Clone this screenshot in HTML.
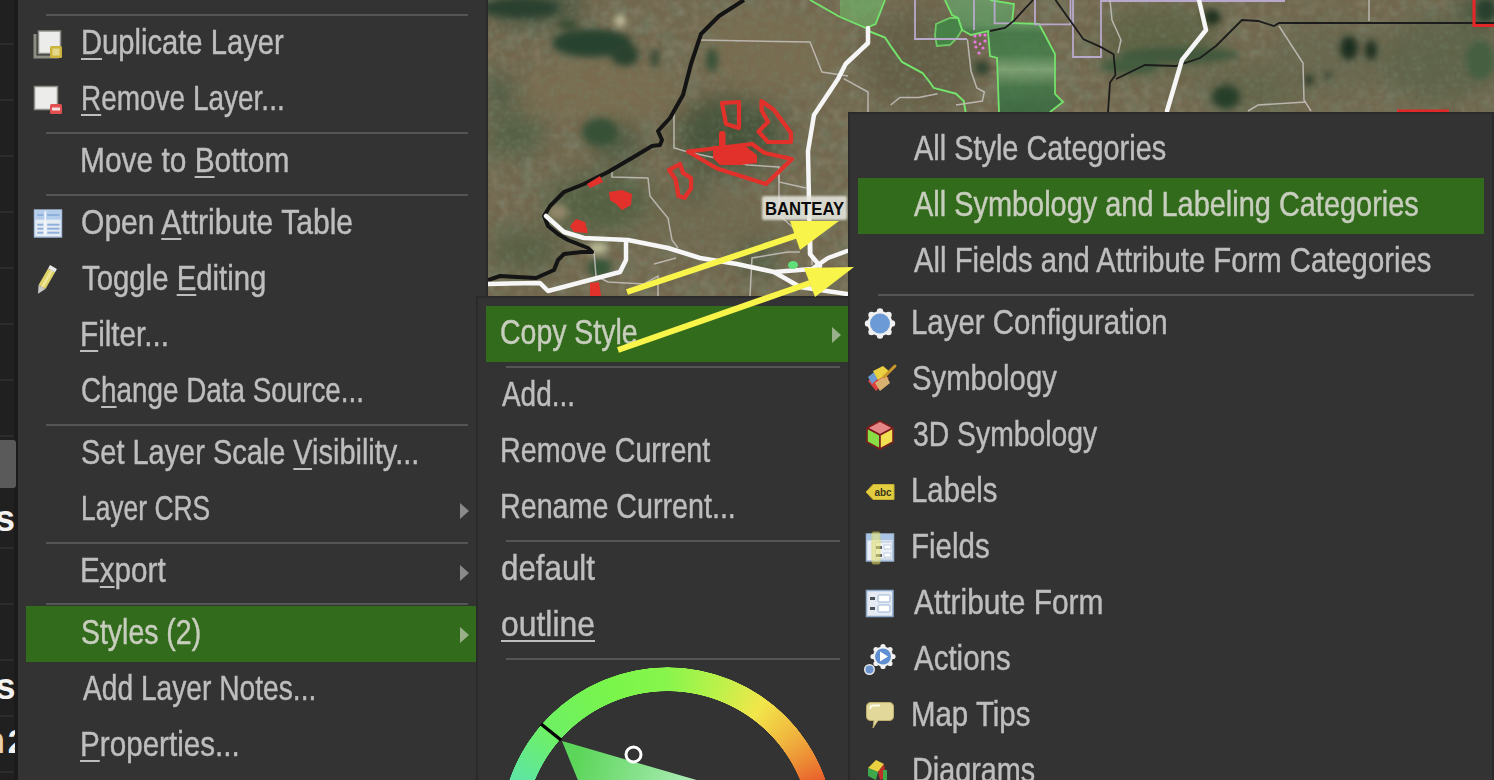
<!DOCTYPE html>
<html><head><meta charset="utf-8"><style>
html,body{margin:0;padding:0;width:1494px;height:780px;overflow:hidden;background:#333;position:relative}
.t{position:absolute;font-family:"Liberation Sans",sans-serif;font-size:35px;line-height:56px;white-space:nowrap;transform-origin:0 0;-webkit-text-stroke:0.45px currentColor}
.t u{text-decoration:underline;text-decoration-thickness:2px;text-underline-offset:4px}
.sep{position:absolute;height:2px;background:#555}
.sl{position:absolute;left:0;width:14px;height:2px;background:#2c2c2c}
.abs{position:absolute}
.arr{position:absolute;width:0;height:0;border-top:8px solid transparent;border-bottom:8px solid transparent;border-left:9px solid #8a8a8a}
</style></head><body>
<!-- left strip -->
<div class="abs" style="left:0;top:0;width:14px;height:780px;background:#202020"></div>
<div class="abs" style="left:14px;top:0;width:4px;height:780px;background:#1b1b1b"></div>
<div class="sl" style="top:43px"></div><div class="sl" style="top:99px"></div><div class="sl" style="top:155px"></div><div class="sl" style="top:211px"></div><div class="sl" style="top:267px"></div><div class="sl" style="top:323px"></div><div class="sl" style="top:379px"></div><div class="sl" style="top:435px"></div><div class="sl" style="top:547px"></div><div class="sl" style="top:603px"></div><div class="sl" style="top:659px"></div><div class="sl" style="top:715px"></div><div class="sl" style="top:771px"></div>
<div class="abs" style="left:0;top:440px;width:16px;height:48px;background:#5a5a5a;border-radius:0 3px 3px 0"></div>
<div class="abs" style="left:0;top:0;width:15px;height:780px;overflow:hidden">
<div class="abs" style="left:-5px;top:499px;font:bold 36px 'Liberation Sans',sans-serif;color:#f2f2f2;line-height:40px">s</div>
<div class="abs" style="left:-4.5px;top:667px;font:bold 36px 'Liberation Sans',sans-serif;color:#f2f2f2;line-height:40px">s</div>
<div class="abs" style="left:-17px;top:721px;font:bold 36px 'Liberation Sans',sans-serif;color:#e8d0a8;line-height:40px">n</div>
<div class="abs" style="left:7.7px;top:722px;font:bold 33px 'Liberation Sans',sans-serif;color:#f2f2f2;line-height:40px">2</div>
</div>
<!-- menu 1 -->
<div class="abs" style="left:18px;top:0;width:468px;height:780px;background:#333"></div>
<div class="abs" style="left:486px;top:0;width:2px;height:780px;background:#2a2a2a"></div>
<div class="sep" style="left:46px;top:14px;width:422px"></div><div class="sep" style="left:46px;top:132px;width:422px"></div><div class="sep" style="left:46px;top:194px;width:422px"></div><div class="sep" style="left:46px;top:424px;width:422px"></div><div class="sep" style="left:46px;top:542px;width:422px"></div><div class="sep" style="left:46px;top:603px;width:422px"></div>
<div class="abs" style="left:26px;top:606px;width:450px;height:56px;background:#336b1d"></div>
<div class="arr" style="left:460px;top:503px"></div>
<div class="arr" style="left:460px;top:565px"></div>
<div class="arr" style="left:460px;top:627px;border-left-color:#9ab08a"></div>
<svg width="80" height="300" viewBox="0 0 80 300" style="position:absolute;left:0;top:0">
<!-- duplicate -->
<path d="M35,34 L35,57 L59,57" fill="none" stroke="#8d8d84" stroke-width="3"/>
<rect x="38.5" y="31" width="22" height="22.5" fill="#ececea" stroke="#8e8e88" stroke-width="1.5"/>
<rect x="50" y="46" width="12" height="12" rx="1.5" fill="#cdb43c"/>
<rect x="52.5" y="48.5" width="7" height="7" fill="#e6d88a"/>
<!-- remove -->
<rect x="34.5" y="86.5" width="23" height="23" fill="#ececea" stroke="#8e8e88" stroke-width="1.5"/>
<rect x="50" y="104" width="12" height="10" rx="1.5" fill="#e05050"/>
<rect x="52" y="107.5" width="8" height="3" fill="#f6e0e0"/>
<!-- table -->
<rect x="34.5" y="210" width="27" height="27" fill="#e6ecf4" stroke="#a8c0e0" stroke-width="1.4"/>
<rect x="35.2" y="210.7" width="25.6" height="9" fill="#b4cdea"/>
<g stroke="#8fb0d8" stroke-width="2">
<line x1="37.3" y1="215" x2="43.3" y2="215"/><line x1="47.3" y1="215" x2="59.5" y2="215"/>
<line x1="37.3" y1="224.7" x2="43.3" y2="224.7"/><line x1="47.3" y1="224.7" x2="59.5" y2="224.7"/>
<line x1="37.3" y1="228.7" x2="43.3" y2="228.7"/><line x1="47.3" y1="228.7" x2="59.5" y2="228.7"/>
<line x1="37.3" y1="232.7" x2="43.3" y2="232.7"/><line x1="47.3" y1="232.7" x2="59.5" y2="232.7"/>
</g>
<line x1="45.3" y1="211" x2="45.3" y2="236" stroke="#f4f8fc" stroke-width="1.6"/>
<!-- pencil -->
<g transform="translate(46,280) rotate(30)">
 <rect x="-4" y="-11" width="8" height="19" fill="#ddd36a"/>
 <rect x="-1" y="-11" width="2.5" height="19" fill="#efe79a"/>
 <rect x="-4" y="-15" width="8" height="4" fill="#e8e8e8"/>
 <path d="M-4,8 L4,8 L0,16 Z" fill="#c8c8c4"/>
</g>
</svg>

<div class="t" style="left:80.50px;top:14px;transform:scaleX(0.8333);color:#bebebe"><u>D</u>uplicate Layer</div>
<div class="t" style="left:80.60px;top:70px;transform:scaleX(0.7992);color:#bebebe"><u>R</u>emove Layer...</div>
<div class="t" style="left:80.44px;top:132px;transform:scaleX(0.8542);color:#bebebe">Move to <u>B</u>ottom</div>
<div class="t" style="left:81.28px;top:194px;transform:scaleX(0.8594);color:#bebebe">Open <u>A</u>ttribute Table</div>
<div class="t" style="left:82.16px;top:250px;transform:scaleX(0.8387);color:#bebebe">Toggle <u>E</u>diting</div>
<div class="t" style="left:80.45px;top:306px;transform:scaleX(0.8485);color:#bebebe"><u>F</u>ilter...</div>
<div class="t" style="left:81.41px;top:362px;transform:scaleX(0.7949);color:#bebebe">C<u>h</u>ange Data Source...</div>
<div class="t" style="left:81.35px;top:424px;transform:scaleX(0.8267);color:#bebebe">Set Layer Scale <u>V</u>isibility...</div>
<div class="t" style="left:80.74px;top:480px;transform:scaleX(0.7545);color:#bebebe">Layer CRS</div>
<div class="t" style="left:80.46px;top:542px;transform:scaleX(0.8469);color:#bebebe">E<u>x</u>port</div>
<div class="t" style="left:81.38px;top:604px;transform:scaleX(0.8125);color:#c8cebe">Styles (2)</div>
<div class="t" style="left:83.00px;top:660px;transform:scaleX(0.8049);color:#bebebe">Add Layer Notes...</div>
<div class="t" style="left:80.46px;top:716px;transform:scaleX(0.8470);color:#bebebe"><u>P</u>roperties...</div>

<!-- map -->
<div class="abs" style="left:488px;top:0;width:1006px;height:296px;overflow:hidden;background:#7b7358">
<svg width="1006" height="296" viewBox="488 0 1006 296" style="position:absolute;left:0;top:0">
<defs>
<filter id="bl" x="-50%" y="-50%" width="200%" height="200%"><feGaussianBlur stdDeviation="12"/></filter>
<filter id="bl2" x="-50%" y="-50%" width="200%" height="200%"><feGaussianBlur stdDeviation="3.5"/></filter>
<filter id="bl3" x="-50%" y="-50%" width="200%" height="200%"><feGaussianBlur stdDeviation="1.2"/></filter>
<filter id="noise" x="0" y="0" width="100%" height="100%">
 <feTurbulence type="fractalNoise" baseFrequency="0.12" numOctaves="3" seed="11" result="n"/>
 <feColorMatrix in="n" type="matrix" values="0 0 0 0 0.58  0 0 0 0 0.53  0 0 0 0 0.42  0 0 0 2.2 -0.95" result="c"/>
 <feGaussianBlur in="c" stdDeviation="1"/>
</filter>
<filter id="noise2" x="0" y="0" width="100%" height="100%">
 <feTurbulence type="fractalNoise" baseFrequency="0.05" numOctaves="2" seed="3" result="n"/>
 <feColorMatrix in="n" type="matrix" values="0 0 0 0 0.22  0 0 0 0 0.3  0 0 0 0 0.2  0 0 0 2.4 -1.1"/>
</filter>
<linearGradient id="gC" gradientUnits="userSpaceOnUse" x1="0" y1="0" x2="0" y2="112">
 <stop offset="0" stop-color="#6aa26a"/><stop offset="0.22" stop-color="#5c9a60"/><stop offset="0.3" stop-color="#3a7c46"/><stop offset="0.48" stop-color="#3f8049"/><stop offset="0.62" stop-color="#7fb07c"/><stop offset="0.78" stop-color="#3c7847"/><stop offset="1" stop-color="#2e6a3e"/>
</linearGradient>
<filter id="speck" x="0" y="0" width="100%" height="100%">
 <feTurbulence type="turbulence" baseFrequency="0.18" numOctaves="2" seed="5" result="n"/>
 <feColorMatrix in="n" type="matrix" values="0 0 0 0 0.22  0 0 0 0 0.3  0 0 0 0 0.2  3 0 0 0 -0.75" result="c"/>
 <feGaussianBlur in="c" stdDeviation="1.3"/>
</filter>
<filter id="speck2" x="0" y="0" width="100%" height="100%">
 <feTurbulence type="fractalNoise" baseFrequency="0.3" numOctaves="2" seed="9" result="n"/>
 <feColorMatrix in="n" type="matrix" values="0 0 0 0 0.72  0 0 0 0 0.66  0 0 0 0 0.55  0 0 0 4 -2.5"/>
</filter>
</defs>
<rect x="488" y="0" width="1006" height="296" fill="#827459"/>
<rect x="488" y="0" width="1006" height="296" filter="url(#noise2)" opacity="0.45"/>
<rect x="488" y="0" width="1006" height="296" filter="url(#noise)" opacity="0.3"/>
<g filter="url(#bl)" opacity="0.9">
 <ellipse cx="535" cy="8" rx="50" ry="14" fill="#3e5640"/>
 <ellipse cx="500" cy="92" rx="14" ry="18" fill="#4a5e44"/>
 <ellipse cx="515" cy="135" rx="30" ry="22" fill="#5a6a4c"/>
 <ellipse cx="617" cy="142" rx="24" ry="18" fill="#4e6246"/>
 <ellipse cx="730" cy="135" rx="55" ry="38" fill="#4c5c40"/>
 <ellipse cx="693" cy="192" rx="16" ry="14" fill="#4a5e42"/>
 <ellipse cx="600" cy="203" rx="55" ry="30" fill="#5c6a4a"/>
 <ellipse cx="525" cy="250" rx="38" ry="22" fill="#606a4c"/>
 <ellipse cx="757" cy="258" rx="20" ry="15" fill="#4e6246"/>
 <ellipse cx="600" cy="90" rx="80" ry="30" fill="#8c7a5a"/>
 <ellipse cx="770" cy="50" rx="70" ry="40" fill="#8a7a5c"/>
 <ellipse cx="710" cy="220" rx="70" ry="25" fill="#7f765a"/>
 <ellipse cx="920" cy="60" rx="60" ry="50" fill="#72694f"/>
 <ellipse cx="1160" cy="40" rx="60" ry="35" fill="#6a6e4e"/>
 <ellipse cx="1250" cy="90" rx="50" ry="25" fill="#6f7152"/>
 <ellipse cx="1330" cy="60" rx="60" ry="40" fill="#78745a"/>
 <ellipse cx="1440" cy="60" rx="60" ry="45" fill="#6a7052"/>
 <ellipse cx="1480" cy="10" rx="20" ry="15" fill="#3e5a40"/>
</g>
<rect x="488" y="0" width="1006" height="296" filter="url(#speck)" opacity="0.45"/>
<g filter="url(#bl2)">
 <ellipse cx="592" cy="43" rx="40" ry="14" fill="#2c4834"/>
 <ellipse cx="625" cy="55" rx="14" ry="11" fill="#2d4834"/>
 <ellipse cx="568" cy="24" rx="10" ry="5" fill="#3a5238"/>
 <ellipse cx="655" cy="58" rx="4" ry="10" fill="#38503a"/>
 <ellipse cx="712" cy="60" rx="6" ry="12" fill="#3c5a3e"/>
 <ellipse cx="1212" cy="17" rx="9" ry="8" fill="#213424"/>
 <ellipse cx="1486" cy="10" rx="10" ry="12" fill="#2a4432"/>
 <ellipse cx="1349" cy="48" rx="9" ry="12" fill="#1f3322"/>
 <ellipse cx="1371" cy="50" rx="6" ry="10" fill="#1f3322"/>
 <ellipse cx="1226" cy="97" rx="14" ry="12" fill="#2c442f"/>
 <ellipse cx="1309" cy="80" rx="4" ry="6" fill="#233624"/>
 <ellipse cx="1328" cy="75" rx="3" ry="4" fill="#2a3c2a"/>
 <ellipse cx="982" cy="68" rx="8" ry="7" fill="#344a34"/>
 <ellipse cx="1180" cy="55" rx="60" ry="8" fill="#4a6444"/>
 <ellipse cx="1130" cy="66" rx="30" ry="8" fill="#4b6846"/>
 <ellipse cx="1480" cy="60" rx="14" ry="20" fill="#4e6a4a"/>
 <ellipse cx="598" cy="248" rx="10" ry="6" fill="#d8d8b0"/>
 <ellipse cx="620" cy="21" rx="6" ry="5" fill="#ece8c0"/>
 <ellipse cx="600" cy="132" rx="18" ry="14" fill="#3c5a3e"/>
 <ellipse cx="520" cy="8" rx="40" ry="10" fill="#2e4634"/>
 <ellipse cx="558" cy="212" rx="10" ry="8" fill="#a89a7a"/>
 <ellipse cx="600" cy="268" rx="12" ry="10" fill="#3e6040"/>
</g>
<rect x="488" y="0" width="1006" height="296" fill="#141a10" opacity="0.14"/>
<!-- green filled areas -->
<path d="M840,17 L866,28 L875.6,24 L885,0 L840,0 Z" fill="#6fbf6a" opacity="0.55"/>
<path d="M945,0 L952,15 L958,18 L962,30 L971,35 L988,31 L990,56 L997,58 L999,112 L1050,112 L1063,102 L1055,94 L1055,54 L1046,37 L1039,24 L1012,23 L1014,4 L990,0 Z" fill="url(#gC)" opacity="0.75"/>
<path d="M945,0 L952,15 L958,18 L962,30 L971,35 L988,31 L990,56 L997,58 L999,112 M1050,112 L1063,102 L1055,94 L1055,54 L1046,37 L1039,24 L1012,23 L1014,4 L990,0" fill="none" stroke="#73e36b" stroke-width="1.8"/>
<path d="M936,24 L950,18 L958,18 L962,30 L957,38 L950,45 L937,46 L935,36 Z" fill="#3f8a48" opacity="0.8" stroke="#73e36b" stroke-width="1.8"/>
<path d="M840,17 L866,28 L875.6,24 L885,0" fill="none" stroke="#73e36b" stroke-width="1.8"/>
<path d="M810,0 L840,17 M866,30 L885,37.5 L892.5,48.7 L902,62 L922.5,73 L930,82.5 L933.7,88 L956,93.7 L963.7,101 L965.6,112" fill="none" stroke="#73e36b" stroke-width="2"/>
<g fill="#e878e0"><circle cx="975" cy="36" r="1.6"/><circle cx="980" cy="35" r="1.6"/><circle cx="985" cy="35" r="1.6"/><circle cx="975" cy="42" r="1.6"/><circle cx="985" cy="41" r="1.6"/><circle cx="976" cy="47" r="1.6"/><circle cx="983" cy="48" r="1.6"/><circle cx="979" cy="53" r="1.6"/><circle cx="980" cy="44" r="1.4"/></g>
<!-- lavender boundaries -->
<path d="M915,0 L915,39 L967,39 M974,0 L974,30 M994.6,0 L994.6,23.4 L1013,23.4 M1035,0 L1035,24.4 L1070.5,24.4 L1070.5,0 M1073,0 L1073,57 L1101,57 L1101,0 M1100,1 L1285,1" fill="none" stroke="#b8a8cc" stroke-width="1.8"/>
<!-- grey boundaries -->
<g fill="none" stroke="#c2bdb8" stroke-width="1.5" opacity="0.9">
 <path d="M700,40 L810,42 L822,72 L848,76"/>
 <path d="M674,110 L674,148 L688,152 L748,165 L779,167 L779,182 L806,188"/>
 <path d="M612,168 L612,177 L648,178 L650,196 L658,206 L668,218 L672,240 L678,248"/>
 <path d="M779,175 L779,215 L798,232 L812,240 L812,265"/>
 <path d="M594,252 L596,276 L608,282 L644,284 L658,276 L658,296 M654,264 L676,258"/>
 <path d="M750,296 L752,258 L788,252 L800,252"/>
 <path d="M967.4,39.4 L971,71 L976.8,88 L984.3,92 L982.4,101 L956,105 M890.6,105 L900,97.5 L918.7,97.5 L937.5,93.7 M843.7,78.7 L868,92 L868,112"/>
 <path d="M1110,0 L1112,20 L1121,40 L1118,53 M1279,26 L1303,63 L1304,100 L1311,111 M1248,111 L1258,105 L1306,102 M1369,0 L1369,21"/>
</g>
<!-- thin dark rivers -->
<path d="M1033,0 L1014,20.6 L1005,28 L990,31 M1055.5,0 L1074,26 L1083.6,39.4 L1100.5,46.9 L1113.6,54.3 L1115.5,75 L1110,82.5 L1108,112 M1116,79 L1145,65 L1176,66 L1200,58 L1216,46 L1242,20 L1258,21 L1274,26 L1279,23 L1494,23" fill="none" stroke="#1c1c1c" stroke-width="1.8"/>
<path d="M1474,0 L1474,25.5 L1494,25.5 M1397,111 L1449,111" fill="none" stroke="#e02828" stroke-width="3.2"/>
<!-- black thick river -->
<path d="M744,0 L719,16 L701,34 L691,64 L683,95 L670,118 L658,131 L662,140 L660,145 L652,146 L632,158 L608,172 L584,184 L564,192 L550,206 L544,216 L548,226 L558,234 L568,240 L588,248 L592,252 L582,252 L564,254 L558,260 L554,270 L536,278 L500,276 L488,280" fill="none" stroke="#141414" stroke-width="4" stroke-linejoin="round"/>
<!-- white roads -->
<g fill="none" stroke="#f6f6f6" stroke-width="4.5" stroke-linejoin="round" stroke-linecap="round">
 <path d="M546,216 L564,232 L584,238 L628,240 L668,248 L700,258 L737,264 L774,272 L812,269 L828,258 L847,251"/>
 <path d="M774,272 L800,287 L847,294"/>
 <path d="M868,28 L868,43 L845.6,64 L838,79 L814,115 L808,151 L810,254 L820,266"/>
 <path d="M488,284 L540,283 L548,291 L620,272 L626,260 L626,242"/>
 <path d="M1199,0 L1206,30 L1182,60 L1167,111"/>
</g>
<!-- red polygons -->
<g fill="none" stroke="#e2302a" stroke-width="4.2" stroke-linejoin="round">
 <path d="M722,103 L739,102 L739,128 L726,124 Z"/>
 <path d="M761.5,101 L774,110 L791,133 L791,142 L768,142 L758.5,131.5 L768,122 L761.5,110 Z"/>
 <path d="M688,151.5 L752,144 L764.6,153 L792,159 L766,184 L717,168.5 Z"/>
 <path d="M669,170 L680,164 L683,173 L691,178 L691,188.5 L684.6,197.7 L678.5,196 L675.4,179 Z"/>
</g>
<g fill="#e2302a">
 <rect x="719" y="131" width="6.5" height="22" rx="3"/>
 <path d="M713,146 L745,146 L757,155 L757,163 L740,165 L720,165 L713,158 Z"/>
 <path d="M609,192 L622,190 L632,194 L631,205 L622,210 L616,204 L610,200 Z"/>
 <path d="M587,184 L600,176 L603,182 L590,188 Z"/>
 <path d="M570,226 L576,219 L585,222 L588,233 L574,232 Z"/>
 <path d="M590,283 L599,282 L601,296 L590,296 Z"/>
</g>
<ellipse cx="793" cy="265" rx="5" ry="4" fill="#5fe07a"/>
<!-- BANTEAY label -->
<rect x="762" y="196" width="85" height="24" rx="2" fill="#e6e6de" opacity="0.88" filter="url(#bl3)"/>
<text x="804.5" y="215" text-anchor="middle" font-family="Liberation Sans" font-weight="bold" font-size="18.5" fill="#0a0a0a" textLength="79" lengthAdjust="spacingAndGlyphs">BANTEAY</text>
</svg>

</div>

<!-- menu 2 -->
<div class="abs" style="left:476px;top:296px;width:374px;height:484px;background:#2a2a2a"></div>
<div class="abs" style="left:478px;top:298px;width:370px;height:482px;background:#333"></div>
<div class="abs" style="left:486px;top:306px;width:362px;height:56px;background:#336b1d"></div>
<div class="arr" style="left:832px;top:327px;border-left-color:#9ab08a"></div>
<div class="sep" style="left:506px;top:366px;width:334px"></div><div class="sep" style="left:506px;top:540px;width:334px"></div><div class="sep" style="left:506px;top:658px;width:334px"></div>
<div class="t" style="left:500.37px;top:304px;transform:scaleX(0.8133);color:#c8cebe">Copy Style</div>
<div class="t" style="left:502.00px;top:366px;transform:scaleX(0.7978);color:#bebebe">Add...</div>
<div class="t" style="left:499.54px;top:422px;transform:scaleX(0.8189);color:#bebebe">Remove Current</div>
<div class="t" style="left:499.54px;top:478px;transform:scaleX(0.8191);color:#bebebe">Rename Current...</div>
<div class="t" style="left:501.11px;top:540px;transform:scaleX(0.8942);color:#bebebe">default</div>
<div class="t" style="left:501.09px;top:596px;transform:scaleX(0.9109);color:#bebebe"><u>outline</u></div>
<div style="position:absolute;left:478px;top:660px;width:370px;height:120px;overflow:hidden">
 <div style="position:absolute;left:22px;top:6.5px;width:335px;height:335px;border-radius:50%;
   background:conic-gradient(from 180deg, #40d8c0 0deg, #58e0b0 100deg, #5ee6a0 111deg, #6ef064 131deg, #7af54a 160deg, #88f54c 180deg, #b8f24a 198deg, #f2e64a 216deg, #f0b43e 232deg, #ec8a34 242deg, #e8582a 252deg, #e8502a 360deg);
   -webkit-mask:radial-gradient(circle, transparent 143px, #000 143.5px, #000 167px, transparent 167.5px);
   mask:radial-gradient(circle, transparent 143px, #000 143.5px, #000 167px, transparent 167.5px)"></div>
</div>
<svg width="370" height="120" viewBox="478 660 370 120" style="position:absolute;left:478px;top:660px">
<defs>
 <linearGradient id="wedge" gradientUnits="userSpaceOnUse" x1="580" y1="750" x2="740" y2="800">
  <stop offset="0" stop-color="#5cd65a"/><stop offset="1" stop-color="#d0f6e0"/>
 </linearGradient>
</defs>
<path d="M541,724 L561,740" stroke="#000" stroke-width="3.5"/>
<path d="M562,741 L800,810 L590,810 Z" fill="url(#wedge)"/>
<circle cx="633.5" cy="754.5" r="7.5" fill="none" stroke="#fff" stroke-width="3"/>
</svg>

<!-- menu 3 -->
<div class="abs" style="left:848px;top:112px;width:646px;height:668px;background:#2a2a2a"></div>
<div class="abs" style="left:850px;top:114px;width:642px;height:666px;background:#333"></div>
<div class="abs" style="left:858px;top:178px;width:626px;height:56px;background:#336b1d"></div>
<div class="sep" style="left:878px;top:294px;width:596px"></div>
<svg width="60" height="780" viewBox="850 0 60 780" style="position:absolute;left:850px;top:0">
<!-- layer config gear -->
<g transform="translate(880,323.5)">
 <g fill="#f0f0f0">
  <circle r="12.5"/>
  <circle cx="0" cy="-12" r="3.2"/><circle cx="8.5" cy="-8.5" r="3.2"/><circle cx="12" cy="0" r="3.2"/><circle cx="8.5" cy="8.5" r="3.2"/>
  <circle cx="0" cy="12" r="3.2"/><circle cx="-8.5" cy="8.5" r="3.2"/><circle cx="-12" cy="0" r="3.2"/><circle cx="-8.5" cy="-8.5" r="3.2"/>
 </g>
 <circle r="10" fill="#6b9ad6"/>
</g>
<!-- symbology brush -->
<g>
 <path d="M868,381 L880,372 L889,378 L876,391 Z" fill="#d94040"/>
 <path d="M868,377 L878,369 L884,373 L872,384 Z" fill="#6a9ad0"/>
 <path d="M873,371 L883,366 L890,372 L878,380 Z" fill="#e8d040"/>
 <path d="M875,383 L886,375 L890,383 L880,391 Z" fill="#d8b070"/>
 <path d="M884,377 L895,366" stroke="#c8962a" stroke-width="3" stroke-linecap="round"/>
</g>
<!-- 3D cube -->
<g stroke="#7a1f1f" stroke-width="1.6" stroke-linejoin="round">
 <path d="M880,421 L893,428 L880,435 L867,428 Z" fill="#e58686"/>
 <path d="M867,428 L880,435 L880,449 L867,442 Z" fill="#88dd44"/>
 <path d="M893,428 L880,435 L880,449 L893,442 Z" fill="#f2e050"/>
</g>
<!-- labels abc -->
<path d="M866,492 L873,484.5 L894,484.5 L894,499.5 L873,499.5 Z" fill="#e2cc40" stroke="#c8b030" stroke-width="1"/>
<text x="883" y="496" text-anchor="middle" font-family="Liberation Sans" font-weight="bold" font-size="10" fill="#3a3520">abc</text>
<!-- fields -->
<rect x="866.5" y="534" width="27" height="27" fill="#e9eef6" stroke="#9ab4d4" stroke-width="1.5"/>
<rect x="867" y="534.5" width="26" height="6" fill="#a9c4e4"/>
<rect x="871" y="540" width="22" height="20" fill="#dde4ee"/>
<rect x="875.5" y="542" width="17" height="17" fill="#eef2f8" stroke="#b8c8dc" stroke-width="1"/>
<rect x="876" y="546" width="6" height="3" fill="#555d68"/><rect x="884" y="545" width="7" height="4" fill="#ffffff" stroke="#b0c4dc" stroke-width="0.8"/>
<rect x="876" y="554" width="6" height="3" fill="#555d68"/><rect x="884" y="553" width="7" height="4" fill="#ffffff" stroke="#b0c4dc" stroke-width="0.8"/>
<rect x="872" y="532" width="8" height="32" rx="1.5" fill="#eeea70" opacity="0.55" stroke="#e0d850" stroke-width="1"/>
<!-- attribute form -->
<rect x="866.5" y="590.5" width="26.5" height="26" fill="#e6ebf3" stroke="#8aa6c8" stroke-width="1.5"/>
<rect x="870" y="597" width="5" height="3" fill="#4a525c"/><rect x="878" y="595" width="12" height="7" rx="1" fill="#fff" stroke="#9ab4d8" stroke-width="1"/>
<rect x="870" y="607" width="5" height="3" fill="#4a525c"/><rect x="878" y="605" width="12" height="7" rx="1" fill="#fff" stroke="#9ab4d8" stroke-width="1"/>
<!-- actions -->
<g transform="translate(883,656.5)">
 <g fill="#f0f0f0">
  <circle r="10"/>
  <circle cx="0" cy="-10" r="2.6"/><circle cx="7" cy="-7" r="2.6"/><circle cx="10" cy="0" r="2.6"/><circle cx="7" cy="7" r="2.6"/>
  <circle cx="0" cy="10" r="2.6"/><circle cx="-7" cy="7" r="2.6"/><circle cx="-10" cy="0" r="2.6"/><circle cx="-7" cy="-7" r="2.6"/>
 </g>
 <circle r="8" fill="#5f8fd0"/>
 <path d="M-3,-5 L5,0 L-3,5 Z" fill="#fff"/>
</g>
<circle cx="869.5" cy="669.5" r="5.5" fill="#e8e8e8"/>
<circle cx="869.5" cy="669.5" r="4" fill="#6a92cc"/>
<!-- map tips -->
<path d="M871,702.5 L889,702.5 Q893.5,702.5 893.5,707 L893.5,716 Q893.5,720.5 889,720.5 L878,720.5 L873,728 L874,720.5 L871,720.5 Q866.5,720.5 866.5,716 L866.5,707 Q866.5,702.5 871,702.5 Z" fill="#e2d89a" stroke="#bfb070" stroke-width="1"/>
<path d="M870,709 Q870,705.5 874,705.5 L880,705.5" stroke="#fffbe6" stroke-width="1.8" fill="none"/>
<!-- diagrams -->
<path d="M868,768 L876,760 L884,764 L878,772 Z" fill="#e8d040"/>
<path d="M868,768 L878,772 L876,780 L868,776 Z" fill="#3ea84a"/>
<path d="M878,772 L884,764 L886,778 L880,780 Z" fill="#c0302a"/>
<rect x="883" y="770" width="4" height="10" fill="#3ea84a"/>
</svg>

<div class="t" style="left:914.00px;top:120px;transform:scaleX(0.8257);color:#bebebe">All Style Categories</div>
<div class="t" style="left:914.00px;top:176px;transform:scaleX(0.8262);color:#c8cebe">All Symbology and Labeling Categories</div>
<div class="t" style="left:914.00px;top:232px;transform:scaleX(0.8363);color:#bebebe">All Fields and Attribute Form Categories</div>
<div class="t" style="left:911.48px;top:294px;transform:scaleX(0.8400);color:#bebebe">Layer Configuration</div>
<div class="t" style="left:912.33px;top:350px;transform:scaleX(0.8363);color:#bebebe">Symbology</div>
<div class="t" style="left:913.19px;top:406px;transform:scaleX(0.8097);color:#bebebe">3D Symbology</div>
<div class="t" style="left:911.48px;top:462px;transform:scaleX(0.8384);color:#bebebe">Labels</div>
<div class="t" style="left:911.47px;top:518px;transform:scaleX(0.8427);color:#bebebe">Fields</div>
<div class="t" style="left:914.00px;top:574px;transform:scaleX(0.8545);color:#bebebe">Attribute Form</div>
<div class="t" style="left:914.00px;top:630px;transform:scaleX(0.8421);color:#bebebe">Actions</div>
<div class="t" style="left:911.48px;top:686px;transform:scaleX(0.8406);color:#bebebe">Map Tips</div>
<div class="t" style="left:911.53px;top:742px;transform:scaleX(0.8219);color:#bebebe">Diagrams</div>
<svg width="1494" height="780" viewBox="0 0 1494 780" style="position:absolute;left:0;top:0;pointer-events:none">
<g fill="#f8f44a" stroke="none">
 <path d="M627,292 L798,235" stroke="#f8f44a" stroke-width="6"/>
 <path d="M839,221 L790,221 L800,250 Z"/>
 <path d="M618,350 L810,283" stroke="#f8f44a" stroke-width="6"/>
 <path d="M854,267 L804,268 L815,297 Z"/>
</g>
</svg>

</body></html>
